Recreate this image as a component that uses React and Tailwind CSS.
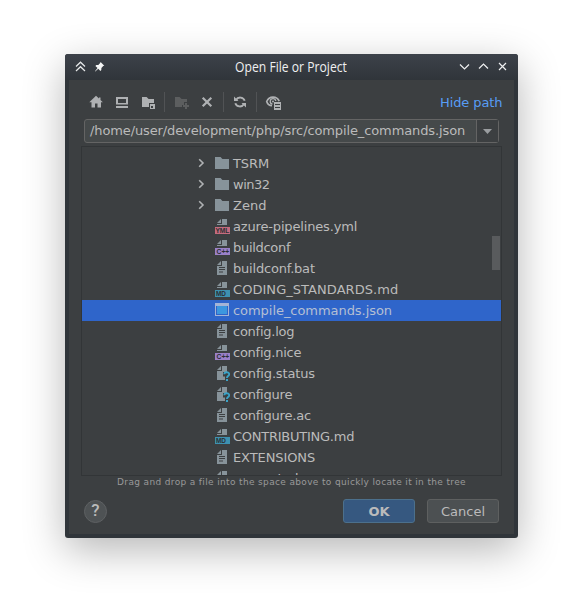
import React from "react";

function Svg({ children, className = "", size = 16 }) {
  return (
    <svg width={size} height={size} viewBox={`0 0 ${size} ${size}`} className={`block shrink-0 ${className}`} fill="#afb1b3">
      {children}
    </svg>
  );
}

function Page({ short }) {
  return (
    <g fill="#87939a">
      <path d="M7 1L3 5h4z" />
      <path d={short ? "M8 1v5H3v1h10V1z" : "M8 1v5H3v9h10V1z"} />
    </g>
  );
}

function Badge({ color, label, x, width }) {
  return (
    <Svg>
      <Page short />
      <path d="M1 9h15v7H1z" fill={color} />
      <text x={x} y="15" textLength={width} lengthAdjust="spacingAndGlyphs" fontSize="7" fontWeight="700" fontFamily="Liberation Sans, sans-serif" fill="#2b2f33">
        {label}
      </text>
    </Svg>
  );
}

function FileIcon({ type }) {
  switch (type) {
    case "dir":
      return <Svg><path d="M1 2h5.600l1.800 2H15v10H1z" fill="#87939a" /></Svg>;
    case "yml":
      return <Badge color="#c46b7e" label="YML" x={1.4} width={14} />;
    case "cpp":
      return <Badge color="#9a80c8" label="C++" x={2.5} width={12.8} />;
    case "md":
      return <Badge color="#3d91b0" label="MD" x={2} width={10} />;
    case "json":
      return (
        <Svg>
          <path d="M1 1h14v13H1z" fill="#a4b4d6" />
          <path d="M2 4h12v9H2z" fill="#3063c8" />
          <path d="M3 4h10v8H3z" fill="#3c97df" />
        </Svg>
      );
    case "unknown":
      return (
        <Svg>
          <g fill="#87939a">
            <path d="M7 1L3 5h4z" />
            <path d="M8 1v5H3v9h8v-3.500H9V7h4V1z" />
          </g>
          <path d="M10.300 9.300C10.300 6.600 15.200 6.600 15.200 9.200C15.200 11 12.900 11 12.900 13" fill="none" stroke="#3ba3c7" strokeWidth="1.800" />
          <path d="M12 14h2v2h-2z" fill="#3ba3c7" />
        </Svg>
      );
    default:
      return (
        <Svg>
          <Page />
          <path d="M5 7h6v1H5zM5 9h6v1H5zM5 11.500h4v1H5z" fill="#3c3f41" />
        </Svg>
      );
  }
}

const rows = [
  ["TSRM", "dir", "tracking-[-0.1px]"],
  ["win32", "dir", "tracking-[-0.5px]"],
  ["Zend", "dir", "tracking-[0px]"],
  ["azure-pipelines.yml", "yml", "tracking-[-0.16px]"],
  ["buildconf", "cpp", "tracking-[-0.3px]"],
  ["buildconf.bat", "text", "tracking-[-0.2px]"],
  ["CODING_STANDARDS.md", "md", "tracking-[0.05px]"],
  ["compile_commands.json", "json", "tracking-[-0.05px]"],
  ["config.log", "text", "tracking-[-0.25px]"],
  ["config.nice", "cpp", "tracking-[-0.25px]"],
  ["config.status", "unknown", "tracking-[-0.15px]"],
  ["configure", "unknown", "tracking-[-0.2px]"],
  ["configure.ac", "text", "tracking-[-0.2px]"],
  ["CONTRIBUTING.md", "md", "tracking-[-0.25px]"],
  ["EXTENSIONS", "text", "tracking-[-0.1px]"],
  ["generated", "text", "tracking-[-0.2px]"],
];

function TreeRow({ name, type, tracking }) {
  const selected = type === "json";
  return (
    <div className={`flex h-[21px] shrink-0 items-start pl-[115px] ${selected ? "bg-[#2f65ca] text-[#b4bfd3]" : ""}`}>
      <div className="w-[17px] shrink-0 pt-[2px]">
        {type === "dir" && (
          <Svg><path d="M2.200 4.200L6 8L2.200 11.800" fill="none" stroke="#afb1b3" strokeWidth="1.600" /></Svg>
        )}
      </div>
      <div className="shrink-0 pt-[2px]">
        <FileIcon type={type} />
      </div>
      <span className={`ml-[3px] leading-[21px] ${tracking}`}>{name}</span>
    </div>
  );
}

function Separator({ className }) {
  return <div className={`h-5 w-px shrink-0 bg-[#515355] ${className}`} />;
}

function Toolbar() {
  return (
    <div className="flex h-[39px] items-center pt-[5px] pl-[19px]">
      <Svg><path d="M8 1.800L1.300 8.300H3.500V13.500H7V9.500H9.500V13.500H13V8.300H14.900L12.500 6V3.500H11V4.600z" /></Svg>
      <Svg className="ml-[10px]"><path fillRule="evenodd" d="M2 3h12v7.500H2zM4 5v4h8V5zM2 12h12v2H2z" /></Svg>
      <Svg className="ml-[10px]">
        <path d="M2 3h4.600l2 2H14v4H9v4H2z" />
        <path fillRule="evenodd" d="M10 10h5v5h-5zM11 12v2h2v-2z" />
      </Svg>
      <Separator className="ml-2" />
      <Svg className="ml-[9px]">
        <path fill="#5c5e5f" d="M1 3h4.600l2 2H13v3h-3v3H8v2H1zM11 9h2v2h2v2h-2v2h-2v-2H9v-2h2z" />
      </Svg>
      <Svg className="ml-[9px]"><path d="M3.700 3.700L12.300 12.300M12.300 3.700L3.700 12.300" stroke="#afb1b3" strokeWidth="2.200" /></Svg>
      <Separator className="ml-2" />
      <Svg className="ml-2">
        <path d="M4 6A4.800 4.800 0 0 1 12.700 6.800M12 10A4.800 4.800 0 0 1 3.300 9.200" fill="none" stroke="#afb1b3" strokeWidth="1.900" />
        <path d="M2 2.500V7h4.500zM14 13.500V9H9.500z" />
      </Svg>
      <Separator className="ml-2" />
      <Svg className="ml-2">
        <path d="M7 11.700C4 11.700 2.300 9.500 1.700 7.500C3 4.500 5.300 3.200 8 3.200C10.700 3.200 13 4.500 14.200 7.200" fill="none" stroke="#afb1b3" strokeWidth="1.700" />
        <path d="M7.500 10.200A2.800 2.800 0 1 1 10.800 7" fill="none" stroke="#afb1b3" strokeWidth="1.300" />
        <circle cx="8" cy="7.500" r="1" />
        <path fillRule="evenodd" d="M9 8h7v8H9zM10 10v1h5v-1zM10 13v1h5v-1z" />
      </Svg>
      <span className="ml-[159px] whitespace-nowrap pt-[2px] tracking-[-0.1px] text-[#589df6]">Hide path</span>
    </div>
  );
}

function TitleBar() {
  return (
    <div className="flex h-[26px] items-center bg-linear-to-b from-[#3d424a] to-[#30353a] text-[#eff0f1]">
      <Svg className="ml-[7px]"><path d="M4 7.500L8.500 3.200L13 7.500M4 12L8.500 7.700L13 12" fill="none" stroke="#e6e8e9" strokeWidth="1.200" /></Svg>
      <Svg className="ml-[3px]">
        <path fill="#f4f5f5" d="M9.600 3L13.300 6.700L12.200 7.100L10.400 9L10.300 11L9.400 11.900L7.300 9.800L4.300 12.500L4 12.200L6.500 9L4.400 6.900L5.300 6L7.300 5.900L9.200 4.100z" />
      </Svg>
      <div className="ml-[128px] flex w-[112px] justify-center pb-[2px]">
        <span className="origin-center scale-x-[0.810] whitespace-nowrap font-['Open_Sans',sans-serif] text-[15px] leading-[24px]">Open File or Project</span>
      </div>
      <Svg className="ml-[109px]"><path d="M4 5.500L8.500 10L13 5.500" fill="none" stroke="#eff0f1" strokeWidth="1.200" /></Svg>
      <Svg className="ml-[3px]"><path d="M4 9.500L8.500 5L13 9.500" fill="none" stroke="#eff0f1" strokeWidth="1.200" /></Svg>
      <Svg className="ml-[3px]"><path d="M5 4L12 11M12 4L5 11" fill="none" stroke="#eff0f1" strokeWidth="1.200" /></Svg>
    </div>
  );
}

export default function App() {
  return (
    <div className="h-[616px] w-[584px] overflow-hidden bg-white pt-[54px] pl-[65px] font-['DejaVu_Sans',sans-serif] text-[13px] text-[#bbbbbb]">
      <div className="h-[484px] w-[453px] overflow-hidden rounded-[3px] bg-[#30353a] shadow-[0_12px_42px_rgba(0,0,0,0.29)]">
        <TitleBar />
        <div className="mx-1 flex h-[454px] flex-col bg-[#3c3f41]">
          <Toolbar />
          <div className="ml-[15px] flex h-6 w-[415px] shrink-0 rounded-[3px] border border-[#646464] bg-[#45494a]">
            <div className="min-w-0 flex-1 whitespace-nowrap pl-[5px] leading-[22px] tracking-[-0.115px]">/home/user/development/php/src/compile_commands.json</div>
            <div className="flex w-[22px] shrink-0 items-center justify-center border-l border-[#646464] bg-[#3c3f41]">
              <svg width="9" height="5" viewBox="0 0 9 5" className="block"><path d="M0 0h9L4.500 5z" fill="#9a9da0" /></svg>
            </div>
          </div>
          <div className="mt-[3px] ml-3 flex h-[330px] w-[421px] shrink-0 border border-[#323537]">
            <div className="-mr-[9px] flex h-full min-w-0 flex-1 flex-col overflow-hidden pt-[6px]">
              {rows.map(([name, type, tracking]) => (
                <TreeRow key={name} name={name} type={type} tracking={tracking} />
              ))}
            </div>
            <div className="mt-[89px] mr-px h-[34px] w-2 shrink-0 bg-[#595b5d]" />
          </div>
          <div className="h-[14px] text-center text-[9px] leading-[12px] tracking-[0.350px] whitespace-nowrap text-[#999999]">
            Drag and drop a file into the space above to quickly locate it in the tree
          </div>
          <div className="mt-[9px] flex h-6 items-center pl-[15px]">
            <div className="flex size-[23px] items-center justify-center rounded-full border border-[#5e6163] bg-[#4e5254] font-['Roboto',sans-serif] text-[17px] font-medium">?</div>
            <div className="ml-[236px] h-6 w-[72px] rounded-[3px] border border-[#4c708c] bg-[#365880] text-center leading-[23px] font-bold">OK</div>
            <div className="ml-3 h-6 w-[72px] rounded-[3px] border border-[#5e6060] bg-[#4c5052] text-center leading-[23px]">Cancel</div>
          </div>
        </div>
      </div>
    </div>
  );
}
